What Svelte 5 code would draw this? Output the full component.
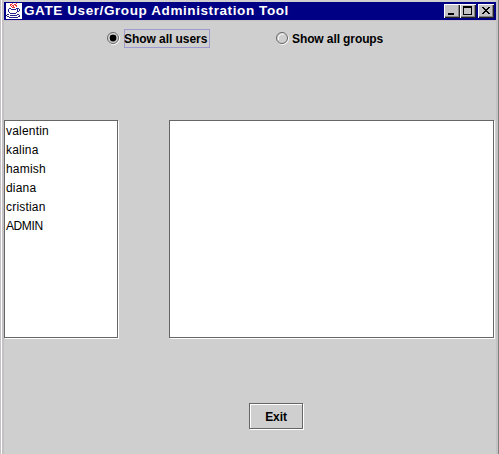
<script>
  const users = ['valentin', 'kalina', 'hamish', 'diana', 'cristian', 'ADMIN'];
  let mode = $state('users');
</script>

<div class="window">
  <header>
    <svg class="logo" width="16" height="16" viewBox="0 0 16 16" shape-rendering="crispEdges">
      <path fill="#fff" d="M0 0h16v16H0z" />
      <path fill="none" stroke="#e33" d="M4 1.5h2M6 .5h1M8 1.5h2M10 .5h1M4 2.5h1M6 2.5h2M9 2.5h2M5 3.5h1M7 3.5h1M10 3.5h1M6 4.5h3" />
      <path fill="none" stroke="#22228c" d="M3 5.5h2M10 5.5h3M2 6.5h1M5 6.5h5M13 6.5h1M2.5 7v2M11.5 6v2M13.5 7v1M11 8.5h2M3 9.5h1M10 9.5h1M4 10.5h6M1 11.5h2M11 11.5h2M0 12.5h1M4 12.5h7M13 12.5h1M1 13.5h2M12 13.5h2M3 14.5h9" />
    </svg>
    <h1>GATE User/Group Administration Tool</h1>
    <div class="controls">
      <button aria-label="Minimize"><svg width="16" height="14" shape-rendering="crispEdges"><path d="M4 9h6v2H4z" /></svg></button>
      <button aria-label="Maximize"><svg width="16" height="14" shape-rendering="crispEdges"><path fill-rule="evenodd" d="M3 2h9v9H3zM4 4v6h7V4z" /></svg></button>
      <button class="close" aria-label="Close"><svg width="16" height="14" shape-rendering="crispEdges"><path d="M4 3h2v1h1v1h2V4h1V3h2v1h-1v1h-1v1H9v1h1v1h1v1h1v1h-2V9H9V8H7v1H6v1H4V9h1V8h1V7h1V6H6V5H5V4H4z" /></svg></button>
    </div>
  </header>

  <div class="modes">
    {#each ['users', 'groups'] as kind}
      <button class="radio" onclick={() => (mode = kind)}>
        <svg width="13" height="13" viewBox="0 0 13 13">
          <circle cx="6.8" cy="6.8" r="5.6" fill="none" stroke="#fff" />
          <circle cx="6" cy="6" r="5.5" fill="#cfcfcf" stroke="#666" />
          <path d="M2.5 8A4.5 4.5 0 0 1 8 2.2" fill="none" stroke="#fff" />
          {#if mode === kind}<circle cx="6" cy="6" r="3.4" fill="#000" />{/if}
        </svg>
        <span class={kind} class:focused={mode === kind}>Show all {kind}</span>
      </button>
    {/each}
  </div>

  <main>
    <ul class="list names">
      {#each users as user}<li class:upper={user === 'ADMIN'}>{user}</li>{/each}
    </ul>
    <div class="list details"></div>
  </main>

  <footer><button class="exit">Exit</button></footer>
</div>

<style>
  :global(body) { background: #cfcfcf; overflow: hidden; }
  .window {
    box-sizing: border-box;
    display: flex;
    flex-direction: column;
    width: 499px;
    height: 454px;
    padding: 2px 2px 0 4px;
    border-right: 1px solid #808080;
    background: linear-gradient(90deg, #c4c0c4 1px, #fff 1px 2px, #c4c0c4 2px 4px, #cfcfcf 4px 496px, #c4c4c4 496px);
    font: bold 12px "Liberation Sans", Arial, sans-serif;
    color: #000;
  }
  button { font: inherit; color: inherit; padding: 0; border: 0; background: none; }
  svg { display: block; flex: none; }
  header { display: flex; height: 18px; background: #000084; align-items: center; flex: none; border-bottom: 1px solid #c8c0c4; }
  .logo { margin-left: 2px; }
  h1 { margin: 0 0 0 2px; color: #fff; font-size: 13.5px; line-height: 18px; letter-spacing: .59px; white-space: nowrap; }
  .controls { display: flex; margin-left: auto; padding-right: 2px; }
  .controls button { width: 16px; height: 14px; background: #c6c3c6; box-shadow: inset 1px 1px #fff, inset -1px -1px #222, inset -2px -2px #848284; }
  .controls .close { margin-left: 2px; }
  .modes { display: flex; height: 19px; padding: 8px 0 0 103px; gap: 66px; flex: none; }
  .radio { display: flex; align-items: center; height: 19px; gap: 4px; }
  .radio span { box-sizing: border-box; width: 86px; height: 19px; padding-top: 1px; line-height: 17px; border: 1px solid transparent; text-align: left; text-indent: -1px; white-space: nowrap; letter-spacing: -.05px; }
  .radio .groups { text-indent: -2px; letter-spacing: -.1px; }
  .radio .focused { border-color: #9c9ace; }
  main { display: flex; gap: 51px; margin-top: 72px; }
  .list { box-sizing: border-box; height: 218px; border: 1px solid #666; background: #fff; box-shadow: 1px 1px #fff; }
  .names { width: 114px; margin: 0; padding: 1px 0 0 1px; list-style: none; font-weight: 400; letter-spacing: .2px; }
  .names li { height: 19px; line-height: 19px; }
  .names .upper { letter-spacing: -.4px; }
  .details { width: 325px; }
  footer { padding: 65px 0 0 245px; }
  .exit { display: block; box-sizing: border-box; width: 54px; height: 26px; padding-top: 1px; letter-spacing: -.1px; border: 1px solid #666; box-shadow: 1px 1px #fff, inset 1px 1px #fff; }
</style>
